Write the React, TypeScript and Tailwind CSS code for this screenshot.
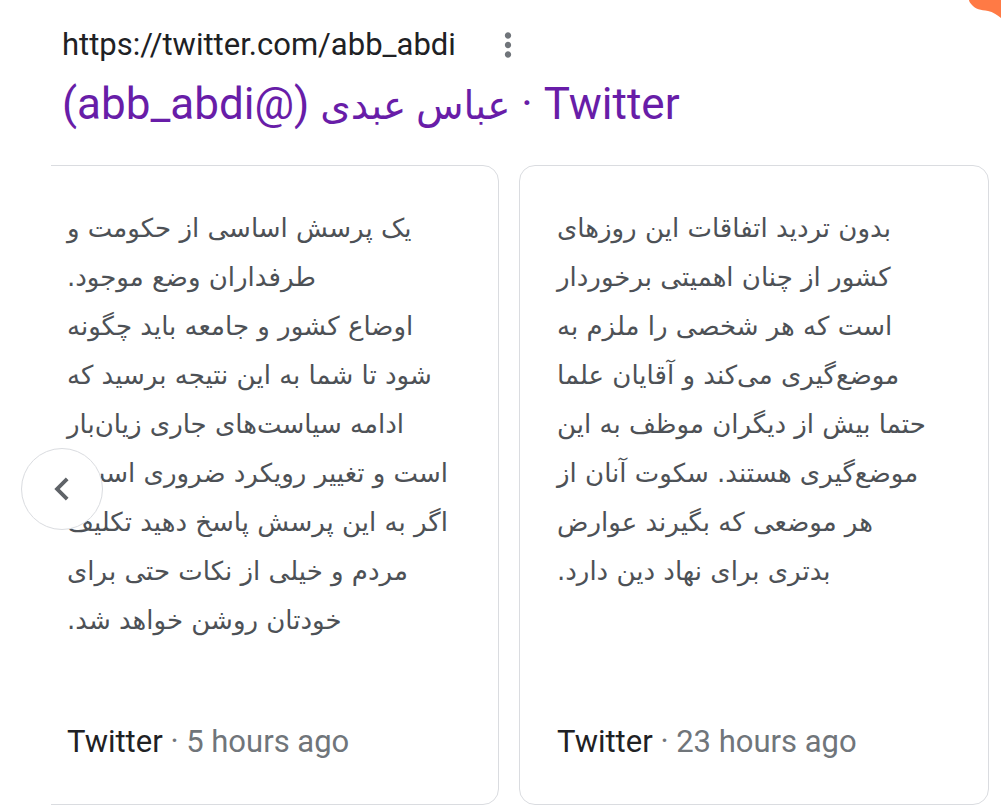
import React from "react";

const card1 = [
  "یک پرسش اساسی از حکومت و",
  "طرفداران وضع موجود.",
  "اوضاع کشور و جامعه باید چگونه",
  "شود تا شما به این نتیجه برسید که",
  "ادامه سیاست‌های جاری زیان‌بار",
  "است و تغییر رویکرد ضروری است؟",
  "اگر به این پرسش پاسخ دهید تکلیف",
  "مردم و خیلی از نکات حتی برای",
  "خودتان روشن خواهد شد.",
];

const card2 = [
  "بدون تردید اتفاقات این روزهای",
  "کشور از چنان اهمیتی برخوردار",
  "است که هر شخصی را ملزم به",
  "موضع‌گیری می‌کند و آقایان علما",
  "حتما بیش از دیگران موظف به این",
  "موضع‌گیری هستند. سکوت آنان از",
  "هر موضعی که بگیرند عوارض",
  "بدتری برای نهاد دین دارد.",
];

function Card({ lines, time }: { lines: string[]; time: string }) {
  return (
    <div className="w-[470px] h-[640px] shrink-0 rounded-[16px] border border-[#dadce0] bg-white flex flex-col justify-between px-[37px] pt-[38px] pb-[44px]">
      <div
        dir="rtl"
        className="text-left text-[26px] leading-[49px] text-[#4d5156] font-['DejaVu_Sans',sans-serif]"
      >
        {lines.map((l, i) => (
          <div key={i} className="whitespace-nowrap">
            {l}
          </div>
        ))}
      </div>
      <div className="text-[31px] leading-[36px] font-['Roboto',sans-serif] whitespace-nowrap">
        <span className="text-[#202124]">Twitter</span>
        <span className="text-[#70757a]"> · {time}</span>
      </div>
    </div>
  );
}

export default function App() {
  return (
    <div className="relative w-[1001px] h-[810px] bg-white overflow-hidden">
      <svg
        className="absolute top-0 right-0"
        width="32"
        height="19"
        viewBox="0 0 32 19"
      >
        <path
          d="M0 0 L32 0 L32 18 C28 15 24 12 19 11 C12 10 6 9 3 5 C1 3 0 1 0 0 Z"
          fill="#ff7a45"
        />
      </svg>

      <div className="pl-[62px] pt-[26px]">
        <div className="flex items-center h-[38px]">
          <span className="text-[31px] leading-[38px] text-[#202124] font-['Roboto',sans-serif]">
            https://twitter.com/abb_abdi
          </span>
          <svg
            className="ml-[33px]"
            width="38"
            height="38"
            viewBox="0 0 24 24"
            fill="#70757a"
          >
            <path d="M12 8c1.1 0 2-.9 2-2s-.9-2-2-2-2 .9-2 2 .9 2 2 2zm0 2c-1.1 0-2 .9-2 2s.9 2 2 2 2-.9 2-2-.9-2-2-2zm0 6c-1.1 0-2 .9-2 2s.9 2 2 2 2-.9 2-2-.9-2-2-2z" />
          </svg>
        </div>
        <div
          dir="rtl"
          className="mt-[14px] text-left text-[44px] leading-[52px] text-[#681da8] font-['Roboto','DejaVu_Sans',sans-serif] whitespace-nowrap"
        >
          Twitter · <span className="text-[39px]">عباس عبدی</span> (@abb_abdi)
        </div>
      </div>

      <div className="relative mt-[33px]">
        <div className="ml-[51px] overflow-hidden">
          <div className="flex gap-[20px] -ml-[22px]">
            <Card lines={card1} time="5 hours ago" />
            <Card lines={card2} time="23 hours ago" />
          </div>
        </div>
        <div className="absolute left-[21px] top-[283px] w-[82px] h-[82px] rounded-full bg-white border border-[#dadce0] flex items-center justify-center">
          <svg width="46" height="46" viewBox="0 0 24 24" fill="#5f6368">
            <path d="M15.41 7.41L14 6l-6 6 6 6 1.41-1.41L10.83 12z" />
          </svg>
        </div>
      </div>
    </div>
  );
}
